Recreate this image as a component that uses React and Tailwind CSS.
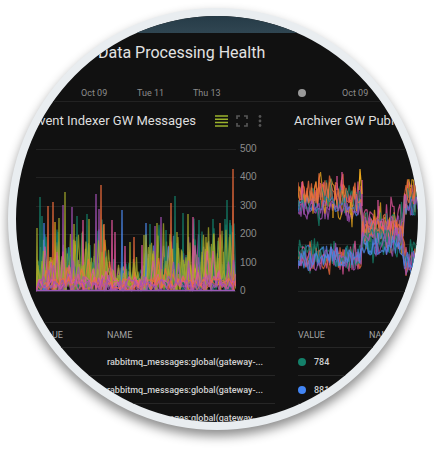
import React from "react";

const TEAL = "#14806a";
const BLUE = "#4a86e8";
const OLIVE = "#a3a82a";
const ORANGE = "#ee6c3c";
const PINK = "#e2559c";
const PURPLE = "#a350b4";
const GOLD = "#e8a51c";

// Small deterministic generator so that the traces are stable between renders.
function makeRandom(seed) {
  let state = seed;
  return () => {
    state = (state * 1664525 + 1013904223) % 4294967296;
    return state / 4294967296;
  };
}

// Highest samples of the message rate: [x, y, colour].
const PEAKS = [
  [1, 88, OLIVE], [4, 57, TEAL], [6, 76, TEAL], [8, 83, BLUE], [12, 66, ORANGE],
  [17, 62, ORANGE], [19, 82, GOLD], [23, 78, OLIVE], [27, 65, PURPLE], [29, 52, OLIVE],
  [36, 67, PURPLE], [38, 84, OLIVE], [41, 76, TEAL], [47, 80, PINK], [51, 74, TEAL],
  [53, 79, OLIVE], [60, 54, PURPLE], [63, 69, PURPLE], [65, 45, ORANGE], [68, 84, ORANGE],
  [76, 80, PINK], [79, 92, PINK], [86, 70, BLUE], [89, 106, PINK], [94, 102, OLIVE],
  [98, 97, ORANGE], [106, 105, PINK], [108, 95, OLIVE], [110, 83, BLUE], [114, 84, TEAL],
  [119, 86, PURPLE], [121, 83, OLIVE], [125, 77, PURPLE], [130, 90, TEAL], [135, 63, ORANGE],
  [139, 56, TEAL], [141, 92, OLIVE], [147, 73, TEAL], [152, 74, OLIVE], [157, 77, PINK],
  [163, 80, TEAL], [170, 97, OLIVE], [177, 79, TEAL], [184, 83, ORANGE], [189, 79, TEAL],
  [191, 60, TEAL], [194, 83, TEAL], [197, 29, ORANGE],
];

function spikes(seed, step, low, high) {
  const random = makeRandom(seed);
  let path = "M0 151";
  for (let x = 0; x < 198; x += step) {
    const reach = low + (high - low) * random() ** 1.5;
    const dip = x > 70 && x < 106 ? 0.5 : 1;
    path += `L${(x + step / 2).toFixed(1)} ${(151 - reach * dip).toFixed(1)}L${x + step} ${(151 - random() * 12).toFixed(1)}`;
  }
  return path;
}

const RATE_SERIES = [
  [PURPLE, spikes(97, 5, 10, 60)],
  [BLUE, spikes(37, 5, 8, 62)],
  [TEAL, spikes(11, 4, 24, 74)],
  [OLIVE, spikes(23, 3, 26, 68)],
  [GOLD, spikes(71, 6, 8, 52)],
  [TEAL, spikes(57, 6, 16, 68)],
  [OLIVE, spikes(49, 4, 20, 64)],
  [OLIVE, spikes(67, 5, 16, 58)],
  [PINK, spikes(101, 6, 6, 46)],
  [ORANGE, spikes(83, 7, 6, 34)],
  [PURPLE, spikes(131, 5, 4, 34)],
  [PINK, spikes(151, 4, 4, 20)],
  [ORANGE, spikes(163, 5, 2, 18)],
  [PURPLE, spikes(171, 3, 1, 12)],
];

function band(seed, centers, spread) {
  const random = makeRandom(seed);
  let path = "";
  for (let x = 0; x <= 124; x += 1.5) {
    const center = x < 64 ? centers[0] : x < 106 ? centers[1] : centers[2];
    const jump = random() > 0.88 ? 1.6 : 1;
    const y = center + (random() - 0.5) * spread * jump;
    path += `${x ? "L" : "M"}${x} ${y.toFixed(1)}`;
  }
  return path;
}

const PUBLISH_SERIES = [
  [PINK, band(7, [54, 78, 54], 28)],
  [PURPLE, band(19, [70, 96, 66], 20)],
  [GOLD, band(13, [60, 91, 57], 38)],
  [ORANGE, band(29, [54, 88, 54], 28)],
  [BLUE, band(17, [66, 96, 66], 20)],
  [TEAL, band(3, [58, 90, 60], 36)],
  [ORANGE, band(31, [52, 90, 52], 24)],
  [PURPLE, band(5, [68, 84, 64], 18)],
  [TEAL, band(41, [114, 102, 116], 28)],
  [PINK, band(43, [119, 93, 119], 26)],
  [ORANGE, band(47, [118, 91, 119], 22)],
  [BLUE, band(59, [117, 104, 120], 24)],
  [TEAL, band(53, [117, 100, 119], 26)],
  [PURPLE, band(51, [120, 104, 120], 22)],
  [BLUE, band(61, [118, 107, 121], 18)],
];

function GridLines({ rows, width }) {
  return rows.map((y) => (
    <path key={y} d={`M0 ${y}.5H${width}`} stroke="#222" strokeWidth="1" />
  ));
}

function Traces({ series, width }) {
  return series.map(([color, d], i) => (
    <path key={i} d={d} fill="none" stroke={color} strokeWidth={width} strokeOpacity="0.78" strokeLinejoin="bevel" />
  ));
}

function MessagesChart() {
  return (
    <svg className="h-40 w-[200px] shrink-0" viewBox="0 0 200 160" role="img" aria-label="Event Indexer GW Messages">
      <GridLines rows={[9, 37, 66, 94, 122, 151]} width={200} />
      <Traces series={RATE_SERIES.slice(0, 6)} width={1.3} />
      {PEAKS.map(([x, y, color]) => (
        <path key={x} d={`M${x - 1} 150L${x} ${y}L${x + 1} 150`} fill={color} stroke={color} strokeWidth="1" opacity="0.8" strokeLinejoin="bevel" />
      ))}
      <Traces series={RATE_SERIES.slice(6)} width={1.2} />
      <path d="M0 150.5H199" stroke="#9a5ab8" strokeWidth="1.5" />
    </svg>
  );
}

function PublishChart() {
  return (
    <svg className="h-40 w-[200px] shrink-0" viewBox="0 0 200 160" role="img" aria-label="Archiver GW Publish">
      <GridLines rows={[9, 56, 104, 151]} width={200} />
      <Traces series={PUBLISH_SERIES} width={1.2} />
      <path d="M64 40V66M4 42V60M44 32V50M39 36V50M80 60V78M107 54V68" stroke={PINK} strokeWidth="1.2" />
      <path d="M62 29L61 50M62 29L64 54M35 64V78M53 62V75" stroke={GOLD} strokeWidth="1.2" fill="none" />
    </svg>
  );
}

function PanelActions() {
  return (
    <div className="flex items-center gap-2 text-[#555]">
      <button type="button" aria-label="Toggle legend">
        <svg width="13" height="12" viewBox="0 0 13 12">
          <path d="M0 1H13M0 4.3H13M0 7.6H13M0 11H13" stroke="#9bb32c" strokeWidth="1.5" />
        </svg>
      </button>
      <button type="button" aria-label="Full screen">
        <svg width="12" height="12" viewBox="0 0 12 12" fill="none">
          <path d="M1 4V1H4M8 1H11V4M11 8V11H8M4 11H1V8" stroke="currentColor" strokeWidth="1.7" />
        </svg>
      </button>
      <button type="button" aria-label="More options">
        <svg width="8" height="12" viewBox="0 0 8 12" fill="currentColor">
          <circle cx="4" cy="1.5" r="1.4" />
          <circle cx="4" cy="6" r="1.4" />
          <circle cx="4" cy="10.5" r="1.4" />
        </svg>
      </button>
    </div>
  );
}

function MetricTable({ rows }) {
  return (
    <table className="w-[239px] table-fixed border-t border-[#262626] text-left text-[9px] leading-3">
      <thead>
        <tr className="h-[25px] border-b border-[#262626] text-[#a4a4a4]">
          <th scope="col" className="w-[71px] p-0 font-normal">VALUE</th>
          <th scope="col" className="p-0 font-normal">NAME</th>
        </tr>
      </thead>
      <tbody>
        {rows.map(([value, color, name], i) => (
          <tr key={i} className="h-7 border-b border-[#262626] font-medium text-[#d0d0d0]">
            <td className="p-0">
              <span className="flex items-center gap-2">
                <svg className="size-2" viewBox="0 0 8 8">
                  <circle cx="4" cy="4" r="4" fill={color} />
                </svg>
                {value}
              </span>
            </td>
            <td className="whitespace-nowrap p-0">{name}</td>
          </tr>
        ))}
      </tbody>
    </table>
  );
}

function Panel({ title, actions, chart, scale, rows }) {
  return (
    <section className="w-[262px] shrink-0 pl-4 pr-[14px]">
      <header className="flex h-[38px] items-center justify-between">
        <h2 className="whitespace-nowrap text-[13px] text-[#dedede]">{title}</h2>
        {actions}
      </header>
      <div className="mb-[22px] flex gap-1 pl-1">
        {chart}
        {scale && (
          <ul className="flex flex-col justify-between py-[3px] font-['Liberation_Sans',sans-serif] text-[10px] leading-3 text-[#8c8c8c]">
            {scale.map((n) => (
              <li key={n}>{n}</li>
            ))}
          </ul>
        )}
      </div>
      <div className="pl-1">
        <MetricTable rows={rows} />
      </div>
    </section>
  );
}

const METRIC = "rabbitmq_messages:global(gateway-...";

export default function App() {
  return (
    <main className="bg-white px-2 pt-2 pb-6 font-[Roboto,sans-serif]">
      <div className="aspect-[418/422] overflow-hidden rounded-[50%] border-8 border-[#e9edf0] bg-[#111] shadow-[0_6px_11px_rgba(0,0,0,0.45)]">
        <div className="h-[17px] bg-linear-to-b from-[#263b47] to-[#304652]" />
        <h1 className="flex h-[39px] items-center whitespace-nowrap pl-[82px] text-base text-[#e2e2e2]">
          Data Processing Health
        </h1>
        <div className="flex h-[30px] items-end border-b border-[#222] pb-[2px] pl-[65px] text-[9px] leading-3 text-[#8c8c8c]">
          <time className="w-14 shrink-0">Oct 09</time>
          <time className="w-14 shrink-0">Tue 11</time>
          <time className="w-[105px] shrink-0">Thu 13</time>
          <svg className="mb-[2px] mr-9 size-2 shrink-0" viewBox="0 0 8 8">
            <circle cx="4" cy="4" r="4" fill="#999" />
          </svg>
          <time className="shrink-0">Oct 09</time>
        </div>
        <div className="flex">
          <Panel
            title="Event Indexer GW Messages"
            actions={<PanelActions />}
            chart={<MessagesChart />}
            scale={[500, 400, 300, 200, 100, 0]}
            rows={[["412", TEAL, METRIC], ["398", BLUE, METRIC], ["365", ORANGE, METRIC]]}
          />
          <Panel
            title="Archiver GW Publ"
            chart={<PublishChart />}
            rows={[["784", TEAL], ["881", "#4285f4"]]}
          />
        </div>
      </div>
    </main>
  );
}
